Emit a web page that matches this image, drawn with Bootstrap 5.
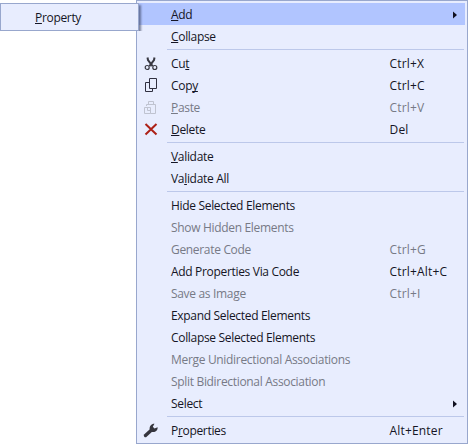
<!DOCTYPE html>
<html lang="en">
<head>
<meta charset="utf-8">
<title>Context menu</title>
<link rel="stylesheet" href="https://cdn.jsdelivr.net/npm/bootstrap@5.3.0/dist/css/bootstrap.min.css">
<style>
body{width:468px;height:444px;overflow:hidden;background:#fff;font-family:"Open Sans","Noto Sans",sans-serif;font-size:12px;font-stretch:92%;letter-spacing:-.32px;color:#1b1b2b}
.menu-panel{width:332px;height:444px;background:#e8edfe;border:1px solid #98a7cd;padding:2px 2px 2px}
.menu-row{height:22px;line-height:22px;padding-top:1px;color:#151525;white-space:nowrap}
.menu-row.is-open{background:#b1c5ff}
.menu-row.is-off{color:#777a86}
.menu-icon{width:32px;padding-left:4px}
.menu-icon svg{display:block}
.menu-key{width:67.500px;letter-spacing:.18px}
.menu-arrow{width:12px}
.menu-rule{height:1px;margin:2px 1px 2px 28px;background:#bcc8ea}
.sub-panel{left:0;top:3px;width:139px;height:28px;padding:2px 0 2px 34px;background:#e8edfe;border:1px solid #98a7cd;box-shadow:2px 2px 2px rgba(50,60,90,.6);z-index:2;clip-path:inset(0 -4px 0 0)}
u{text-decoration-thickness:1px;text-underline-offset:1px;text-decoration-skip-ink:none}
</style>
<script src="https://cdn.jsdelivr.net/npm/bootstrap@5.3.0/dist/js/bootstrap.bundle.min.js"></script>
</head>
<body class="position-relative">
<div class="menu-panel ms-auto d-flex flex-column">
  <div class="menu-row is-open d-flex align-items-center"><span class="menu-icon"></span><span class="flex-grow-1"><u>A</u>dd</span><span class="menu-arrow"><svg class="d-block" width="5" height="8"><path d="M0 0.500L4 4L0 7.500Z" fill="#101020"/></svg></span></div>
  <div class="menu-row d-flex align-items-center"><span class="menu-icon"></span><span><u>C</u>ollapse</span></div>
  <div class="menu-rule"></div>
  <div class="menu-row d-flex align-items-center"><span class="menu-icon"><svg width="16" height="16" viewBox="0 0 16 16" fill="none" stroke="#383842"><path d="M4.500 1.500L5 4L9.600 10.200M11.500 1.500L11 4L6.400 10.200" stroke-width="2"/><circle cx="4.200" cy="11.500" r="2" stroke-width="1.200"/><circle cx="11.800" cy="11.500" r="2" stroke-width="1.200"/></svg></span><span class="flex-grow-1">Cu<u>t</u></span><span class="menu-key me-2">Ctrl+X</span></div>
  <div class="menu-row d-flex align-items-center"><span class="menu-icon"><svg width="16" height="16" viewBox="0 0 16 16" fill="none" stroke="#303040"><path d="M6.500 .5h7v10h-7zM6.500 4.500h-4v9h7v-3"/></svg></span><span class="flex-grow-1">Cop<u>y</u></span><span class="menu-key me-2">Ctrl+C</span></div>
  <div class="menu-row is-off d-flex align-items-center"><span class="menu-icon"><svg width="16" height="16" viewBox="0 0 16 16" fill="none" stroke="#bfc3d0"><path d="M3.500 6V4.500h9v9h-5M5.500 4V1.500h5V4M1.500 7.500h6v6h-6zM4.500 7.500v3h3"/></svg></span><span class="flex-grow-1"><u>P</u>aste</span><span class="menu-key me-2">Ctrl+V</span></div>
  <div class="menu-row d-flex align-items-center"><span class="menu-icon"><svg width="16" height="16" viewBox="0 0 16 16" fill="none" stroke="#ad2117" stroke-width="2"><path d="M2.500 2L13.500 12.500M13.500 2L2.500 12.500"/></svg></span><span class="flex-grow-1"><u>D</u>elete</span><span class="menu-key me-2">Del</span></div>
  <div class="menu-rule"></div>
  <div class="menu-row d-flex align-items-center"><span class="menu-icon"></span><span><u>V</u>alidate</span></div>
  <div class="menu-row d-flex align-items-center"><span class="menu-icon"></span><span>Va<u>l</u>idate All</span></div>
  <div class="menu-rule"></div>
  <div class="menu-row d-flex align-items-center"><span class="menu-icon"></span><span>Hide Selected Elements</span></div>
  <div class="menu-row is-off d-flex align-items-center"><span class="menu-icon"></span><span>Show Hidden Elements</span></div>
  <div class="menu-row is-off d-flex align-items-center"><span class="menu-icon"></span><span class="flex-grow-1">Generate Code</span><span class="menu-key me-2">Ctrl+G</span></div>
  <div class="menu-row d-flex align-items-center"><span class="menu-icon"></span><span class="flex-grow-1">Add Properties Via Code</span><span class="menu-key me-2">Ctrl+Alt+C</span></div>
  <div class="menu-row is-off d-flex align-items-center"><span class="menu-icon"></span><span class="flex-grow-1">Save as Image</span><span class="menu-key me-2">Ctrl+I</span></div>
  <div class="menu-row d-flex align-items-center"><span class="menu-icon"></span><span>Expand Selected Elements</span></div>
  <div class="menu-row d-flex align-items-center"><span class="menu-icon"></span><span>Collapse Selected Elements</span></div>
  <div class="menu-row is-off d-flex align-items-center"><span class="menu-icon"></span><span>Merge Unidirectional Associations</span></div>
  <div class="menu-row is-off d-flex align-items-center"><span class="menu-icon"></span><span>Split Bidirectional Association</span></div>
  <div class="menu-row d-flex align-items-center"><span class="menu-icon"></span><span class="flex-grow-1">Select</span><span class="menu-arrow"><svg class="d-block" width="5" height="8"><path d="M0 0.500L4 4L0 7.500Z" fill="#101020"/></svg></span></div>
  <div class="menu-rule"></div>
  <div class="menu-row d-flex align-items-center"><span class="menu-icon"><svg width="16" height="16" viewBox="0 0 16 16" fill="none" stroke="#35353d"><path d="M2.500 12.500L8.500 7" stroke-width="3.400" stroke-linecap="round"/><path d="M11.500 .7L9.800 3.800L11.500 5.500L14.600 4.200C15 7.500 12 9.700 9 8.900L6.700 6.500C6.100 3.300 8.500 .5 11.500 .7Z" fill="#35353d" stroke="none"/></svg></span><span class="flex-grow-1">P<u>r</u>operties</span><span class="menu-key me-2">Alt+Enter</span></div>
</div>
<div class="sub-panel position-absolute"><div class="menu-row"><u>P</u>roperty</div></div>
</body>
</html>
